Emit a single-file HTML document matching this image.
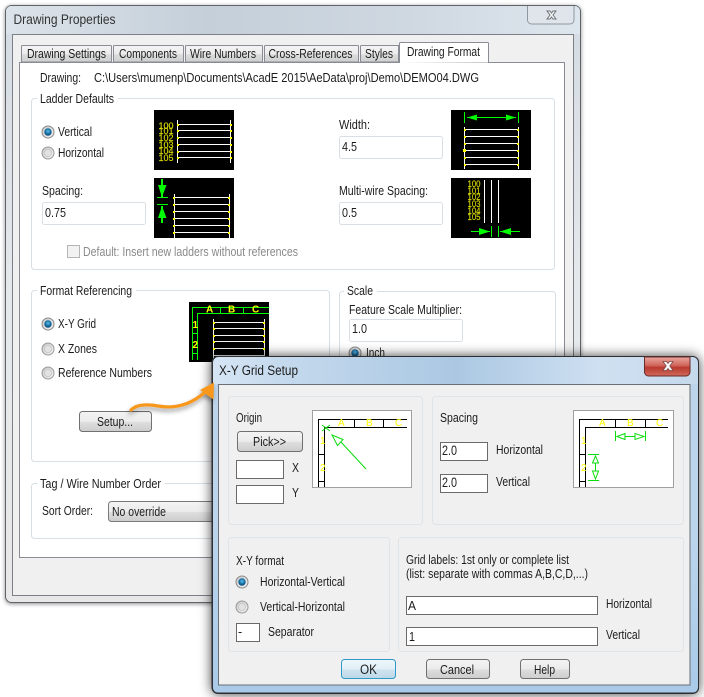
<!DOCTYPE html>
<html><head><meta charset="utf-8"><title>Drawing Properties</title>
<style>
html,body{margin:0;padding:0;background:#fff;width:704px;height:697px;overflow:hidden}
svg{display:block}
text{font-family:"Liberation Sans",sans-serif;font-size:12.5px;fill:#1c1c1c}
.t13{font-size:13.5px}
.y{font-family:"Liberation Sans",sans-serif;font-size:9.5px;fill:#dcdc00;stroke:#dcdc00;stroke-width:.15}
.yy{font-size:10px;fill:#ffff30}
</style></head><body>
<svg width="704" height="697" viewBox="0 0 704 697" xmlns="http://www.w3.org/2000/svg">
<defs>
<linearGradient id="tb1" x1="0" x2="1" y1="0" y2="0"><stop offset="0" stop-color="#dce3ea"/><stop offset=".35" stop-color="#c4cfd9"/><stop offset=".7" stop-color="#cfd8e1"/><stop offset="1" stop-color="#dde5ed"/></linearGradient>
<linearGradient id="fr1" x1="0" x2="0" y1="0" y2="1"><stop offset="0" stop-color="#cfd8e1"/><stop offset=".05" stop-color="#d5dce3"/><stop offset=".5" stop-color="#e6e9ec"/><stop offset="1" stop-color="#e8e8e8"/></linearGradient>
<linearGradient id="tb2" x1="0" x2="1" y1="0" y2="0"><stop offset="0" stop-color="#d6e5f4"/><stop offset=".15" stop-color="#c4d9ed"/><stop offset=".5" stop-color="#abc8e3"/><stop offset=".8" stop-color="#cfe0f1"/><stop offset="1" stop-color="#c5d9ec"/></linearGradient>
<linearGradient id="fr2" x1="0" x2="0" y1="0" y2="1"><stop offset="0" stop-color="#bdd4ea"/><stop offset=".5" stop-color="#bcd5ec"/><stop offset="1" stop-color="#a9cae8"/></linearGradient>
<linearGradient id="tab" x1="0" x2="0" y1="0" y2="1"><stop offset="0" stop-color="#f4f4f4"/><stop offset=".5" stop-color="#ececec"/><stop offset=".55" stop-color="#dcdcdc"/><stop offset="1" stop-color="#cfcfcf"/></linearGradient>
<linearGradient id="btn" x1="0" x2="0" y1="0" y2="1"><stop offset="0" stop-color="#f4f4f4"/><stop offset=".5" stop-color="#ebebeb"/><stop offset=".55" stop-color="#dddddd"/><stop offset="1" stop-color="#cdcdcd"/></linearGradient>
<linearGradient id="okb" x1="0" x2="0" y1="0" y2="1"><stop offset="0" stop-color="#eef7fc"/><stop offset=".5" stop-color="#e2eff7"/><stop offset=".55" stop-color="#cfe3ef"/><stop offset="1" stop-color="#bdd8e8"/></linearGradient>
<linearGradient id="red" x1="0" x2="0" y1="0" y2="1"><stop offset="0" stop-color="#e9a89f"/><stop offset=".45" stop-color="#d0645a"/><stop offset=".55" stop-color="#b93a2e"/><stop offset="1" stop-color="#d0685c"/></linearGradient>
<radialGradient id="rb" cx=".5" cy=".4" r=".6"><stop offset="0" stop-color="#5fc0ea"/><stop offset=".6" stop-color="#156fa4"/><stop offset="1" stop-color="#0d4a72"/></radialGradient>
<linearGradient id="rg" x1="0" x2="1" y1="0" y2="1"><stop offset="0" stop-color="#c6c6c6"/><stop offset="1" stop-color="#f6f6f6"/></linearGradient>
<filter id="s1" x="-10%" y="-10%" width="120%" height="120%"><feDropShadow dx="0" dy="1" stdDeviation="2.2" flood-color="#000" flood-opacity=".45"/></filter>
<filter id="s2" x="-10%" y="-10%" width="120%" height="120%"><feDropShadow dx="0" dy="0" stdDeviation="6" flood-color="#000" flood-opacity=".75"/></filter>
<filter id="s3" x="-20%" y="-40%" width="140%" height="200%"><feDropShadow dx="-1" dy="3" stdDeviation="2.5" flood-color="#000" flood-opacity=".4"/></filter>
<g id="r0"><circle r="6" fill="url(#rg)" stroke="#9a9a9a"/><circle r="3.6" fill="#e2e2e2" stroke="#c6c6c6" stroke-width=".8"/></g>
<g id="r1"><circle r="6" fill="url(#rg)" stroke="#8a8a8a"/><circle r="3.7" fill="url(#rb)"/></g>
</defs>

<!-- BACK WINDOW -->
<rect x="5.5" y="5.5" width="575" height="597" rx="6" fill="url(#fr1)" stroke="#5f6368" filter="url(#s1)"/>
<path d="M6 34V11a5 5 0 0 1 5-5H575a5 5 0 0 1 5 5V34Z" fill="url(#tb1)"/>
<path d="M527.5 6V20a4 4 0 0 0 4 4H570a4 4 0 0 0 4-4V6" fill="#dfe5eb" stroke="#8f979e"/>
<path d="M547 11l3 0 1.5 2 1.5-2 3 0-3 4 3 4-3 0-1.5-2-1.5 2-3 0 3-4Z" fill="#f5f5f5" stroke="#6f7479"/>
<text x="13.5" y="24" class="t13" textLength="102" lengthAdjust="spacingAndGlyphs" style="fill:#333">Drawing Properties</text>
<rect x="12.5" y="34.5" width="561" height="561" fill="#f0f0f0" stroke="#7c8086"/>
<rect x="19.5" y="62.5" width="545" height="495" fill="#fff" stroke="#898c95"/>

<!-- tabs -->
<g stroke="#898c95" fill="url(#tab)">
<path d="M21.5 62V46.5a1 1 0 0 1 1-1H110.500a1 1 0 0 1 1 1V62Z"/>
<path d="M113.500 62V46.500a1 1 0 0 1 1-1H182.500a1 1 0 0 1 1 1V62Z"/>
<path d="M185.500 62V46.500a1 1 0 0 1 1-1H261.500a1 1 0 0 1 1 1V62Z"/>
<path d="M264.500 62V46.500a1 1 0 0 1 1-1H357.500a1 1 0 0 1 1 1V62Z"/>
<path d="M360.500 62V46.500a1 1 0 0 1 1-1H398.500V62Z"/>
</g>
<path d="M399.500 63V43.500a1 1 0 0 1 1-1H487.500a1 1 0 0 1 1 1V62.500" fill="#fff" stroke="#898c95"/>
<text x="27" y="58" textLength="79" lengthAdjust="spacingAndGlyphs">Drawing Settings</text>
<text x="119" y="58" textLength="58" lengthAdjust="spacingAndGlyphs">Components</text>
<text x="190" y="58" textLength="66" lengthAdjust="spacingAndGlyphs">Wire Numbers</text>
<text x="268.500" y="58" textLength="84" lengthAdjust="spacingAndGlyphs">Cross-References</text>
<text x="365" y="58" textLength="28" lengthAdjust="spacingAndGlyphs">Styles</text>
<text x="407" y="56" textLength="73" lengthAdjust="spacingAndGlyphs">Drawing Format</text>

<text x="40" y="82" textLength="41" lengthAdjust="spacingAndGlyphs">Drawing:</text>
<text x="94" y="82" textLength="385" lengthAdjust="spacingAndGlyphs">C:\Users\mumenp\Documents\AcadE 2015\AeData\proj\Demo\DEMO04.DWG</text>

<!-- group boxes back -->
<g fill="none" stroke="#d5dfe5">
<rect x="31.500" y="98.500" width="523" height="171" rx="3"/>
<rect x="31.500" y="290.500" width="298" height="171" rx="3"/>
<rect x="339.500" y="291.500" width="216" height="100" rx="3"/>
<rect x="31.500" y="483.500" width="300" height="55" rx="3"/>
</g>
<rect x="37" y="92" width="81" height="12" fill="#fff"/>
<rect x="37" y="285" width="99" height="12" fill="#fff"/>
<rect x="344" y="285" width="33" height="12" fill="#fff"/>
<rect x="37" y="478" width="128" height="12" fill="#fff"/>
<text x="40" y="103" textLength="74" lengthAdjust="spacingAndGlyphs">Ladder Defaults</text>
<text x="40" y="295" textLength="92" lengthAdjust="spacingAndGlyphs">Format Referencing</text>
<text x="347" y="295" textLength="26" lengthAdjust="spacingAndGlyphs">Scale</text>
<text x="40" y="488" textLength="121" lengthAdjust="spacingAndGlyphs">Tag / Wire Number Order</text>

<use href="#r1" x="48" y="132"/>
<use href="#r0" x="48" y="153"/>
<text x="58" y="136" textLength="34" lengthAdjust="spacingAndGlyphs">Vertical</text>
<text x="58" y="157" textLength="46" lengthAdjust="spacingAndGlyphs">Horizontal</text>
<text x="42" y="195" textLength="41" lengthAdjust="spacingAndGlyphs">Spacing:</text>
<text x="339" y="129" textLength="31" lengthAdjust="spacingAndGlyphs">Width:</text>
<text x="339" y="195" textLength="89" lengthAdjust="spacingAndGlyphs">Multi-wire Spacing:</text>
<g fill="#fff" stroke="#d9dfe4">
<rect x="42.500" y="202.500" width="103" height="22" rx="2"/>
<rect x="339.500" y="136.500" width="103" height="22" rx="2"/>
<rect x="339.500" y="202.500" width="103" height="22" rx="2"/>
<rect x="349.500" y="319.500" width="113" height="22" rx="2"/>
</g>
<text x="45" y="217" textLength="21" lengthAdjust="spacingAndGlyphs">0.75</text>
<text x="342" y="151" textLength="15" lengthAdjust="spacingAndGlyphs">4.5</text>
<text x="342" y="217" textLength="15" lengthAdjust="spacingAndGlyphs">0.5</text>
<rect x="67.500" y="245.500" width="12" height="12" fill="#f2f2f2" stroke="#b5b5b5"/>
<text x="83" y="256" textLength="215" lengthAdjust="spacingAndGlyphs" style="fill:#8a8a8a">Default: Insert new ladders without references</text>

<!-- img 1 -->
<rect x="154" y="110" width="80" height="60" fill="#000"/>
<path d="M177.500 120V163M230.500 120V163M178 124.500H230M178 130.500H230M178 137.500H230M178 144.500H230M178 151.500H230M178 157.500H230" stroke="#fff"/>
<g fill="#ff0"><rect x="177" y="124" width="2" height="2"/><rect x="177" y="130" width="2" height="2"/><rect x="177" y="137" width="2" height="2"/><rect x="177" y="144" width="2" height="2"/><rect x="177" y="151" width="2" height="2"/><rect x="177" y="157" width="2" height="2"/><rect x="230" y="124" width="2" height="2"/><rect x="230" y="130" width="2" height="2"/><rect x="230" y="137" width="2" height="2"/><rect x="230" y="144" width="2" height="2"/><rect x="230" y="151" width="2" height="2"/><rect x="230" y="157" width="2" height="2"/></g>
<text class="y" x="158.500" y="129" textLength="15" lengthAdjust="spacingAndGlyphs">100</text>
<text class="y" x="158.500" y="134" textLength="15" lengthAdjust="spacingAndGlyphs">101</text>
<text class="y" x="158.500" y="141" textLength="15" lengthAdjust="spacingAndGlyphs">102</text>
<text class="y" x="158.500" y="148" textLength="15" lengthAdjust="spacingAndGlyphs">103</text>
<text class="y" x="158.500" y="154" textLength="15" lengthAdjust="spacingAndGlyphs">104</text>
<text class="y" x="158.500" y="161" textLength="15" lengthAdjust="spacingAndGlyphs">105</text>

<!-- img 2 -->
<rect x="154" y="178" width="80" height="60" fill="#000"/>
<path d="M174.500 194V238M229.500 194V238M175 197.500H229M175 204.500H229M175 211.500H229M175 218.500H229M175 225.500H229M175 232.500H229" stroke="#fff"/>
<g fill="#ff0"><rect x="173" y="197" width="2" height="2"/><rect x="173" y="204" width="2" height="2"/><rect x="173" y="211" width="2" height="2"/><rect x="173" y="218" width="2" height="2"/><rect x="173" y="225" width="2" height="2"/><rect x="173" y="232" width="2" height="2"/><rect x="228" y="197" width="2" height="2"/><rect x="228" y="204" width="2" height="2"/><rect x="228" y="211" width="2" height="2"/><rect x="228" y="218" width="2" height="2"/><rect x="228" y="225" width="2" height="2"/><rect x="228" y="232" width="2" height="2"/></g>
<g fill="#0f0"><rect x="161" y="179" width="2" height="44"/><path d="M158 185H166.500L162 197ZM162 206L166.500 218H158Z"/></g>
<rect x="161" y="198" width="2" height="8" fill="#000"/>
<path d="M157 197.500H168M157 204.500H168" stroke="#0f0"/>

<!-- img 3 -->
<rect x="451" y="110" width="80" height="60" fill="#000"/>
<path d="M464.500 127V169M518.500 127V169M465 129.500H518M465 136.500H518M465 143.500H518M465 150.500H518M465 157.500H518M465 164.500H518" stroke="#fff"/>
<g fill="#ff0"><rect x="464" y="129" width="2" height="2"/><rect x="464" y="136" width="2" height="2"/><rect x="464" y="143" width="2" height="2"/><rect x="463" y="149" width="3" height="3"/><rect x="464" y="157" width="2" height="2"/><rect x="464" y="164" width="2" height="2"/><rect x="517" y="129" width="2" height="2"/><rect x="517" y="136" width="2" height="2"/><rect x="517" y="143" width="2" height="2"/><rect x="517" y="150" width="2" height="2"/><rect x="517" y="157" width="2" height="2"/><rect x="517" y="164" width="2" height="2"/></g>
<path d="M464.500 112V123M518.500 112V123M467 117.500H516" stroke="#0f0"/>
<path d="M467 117.500L477 114.500V120.500ZM516 117.500L506 114.500V120.500Z" fill="#0f0"/>

<!-- img 4 -->
<rect x="451" y="178" width="80" height="60" fill="#000"/>
<path d="M484.500 180V223M491.500 180V223M498.500 180V223" stroke="#fff"/>
<text class="y" x="467.500" y="187" textLength="13" lengthAdjust="spacingAndGlyphs">100</text>
<text class="y" x="467.500" y="194" textLength="13" lengthAdjust="spacingAndGlyphs">101</text>
<text class="y" x="467.500" y="200" textLength="13" lengthAdjust="spacingAndGlyphs">102</text>
<text class="y" x="467.500" y="207" textLength="13" lengthAdjust="spacingAndGlyphs">103</text>
<text class="y" x="467.500" y="214" textLength="13" lengthAdjust="spacingAndGlyphs">104</text>
<text class="y" x="467.500" y="220" textLength="13" lengthAdjust="spacingAndGlyphs">105</text>
<path d="M491.500 226V237M498.500 226V237M471 231.500H490M500 231.500H520" stroke="#0f0"/>
<path d="M490 231.500L479 228V235ZM500 231.500L511 228V235Z" fill="#0f0"/>

<!-- format referencing -->
<use href="#r1" x="48" y="324"/>
<use href="#r0" x="48" y="349"/>
<use href="#r0" x="48" y="373"/>
<text x="58" y="328" textLength="38" lengthAdjust="spacingAndGlyphs">X-Y Grid</text>
<text x="58" y="353" textLength="39" lengthAdjust="spacingAndGlyphs">X Zones</text>
<text x="58" y="377" textLength="94" lengthAdjust="spacingAndGlyphs">Reference Numbers</text>
<rect x="189" y="302" width="80" height="60" fill="#000"/>
<path d="M192.500 307.500H269M197.500 313.500H269M192.500 307V360M197.500 313V360M220.500 307V313M243.500 307V313M192 333.500H198M192 353.500H198" stroke="#0f0"/>
<path d="M213.500 319V362M264.500 319V362M214 322.500H264M214 328.500H264M214 335.500H264M214 341.500H264M214 348.500H264M214 355.500H264" stroke="#f4f4f4"/>
<g fill="#ff0"><rect x="213" y="322" width="2" height="2"/><rect x="213" y="328" width="2" height="2"/><rect x="213" y="335" width="2" height="2"/><rect x="213" y="341" width="2" height="2"/><rect x="213" y="348" width="2" height="2"/><rect x="263" y="322" width="2" height="2"/><rect x="263" y="328" width="2" height="2"/><rect x="263" y="335" width="2" height="2"/><rect x="263" y="341" width="2" height="2"/><rect x="263" y="348" width="2" height="2"/></g>
<text class="yy" x="206" y="312.500" style="font-weight:bold;fill:#ff0">A</text>
<text class="yy" x="228" y="312.500" style="font-weight:bold;fill:#ff0">B</text>
<text class="yy" x="252" y="312.500" style="font-weight:bold;fill:#ff0">C</text>
<text class="yy" x="192.500" y="328" style="font-weight:bold;fill:#ff0">1</text>
<text class="yy" x="192.500" y="348" style="font-weight:bold;fill:#ff0">2</text>
<rect x="79.500" y="411.500" width="72" height="20" rx="3" fill="url(#btn)" stroke="#707070"/>
<text x="97" y="426" textLength="36" lengthAdjust="spacingAndGlyphs">Setup...</text>

<!-- scale -->
<text x="349" y="314" textLength="113" lengthAdjust="spacingAndGlyphs">Feature Scale Multiplier:</text>
<text x="352" y="333" textLength="15" lengthAdjust="spacingAndGlyphs">1.0</text>
<use href="#r1" x="355" y="353"/>
<text x="366" y="357" textLength="19" lengthAdjust="spacingAndGlyphs">Inch</text>

<!-- tag -->
<text x="42" y="515" textLength="51" lengthAdjust="spacingAndGlyphs">Sort Order:</text>
<rect x="108.500" y="501.500" width="130" height="20" rx="3" fill="url(#btn)" stroke="#7a7a7a"/>
<text x="112" y="516" textLength="54" lengthAdjust="spacingAndGlyphs">No override</text>

<!-- FRONT WINDOW -->
<rect x="212" y="356.500" width="486.500" height="337" rx="6" fill="url(#fr2)" stroke="#2d2f33" filter="url(#s2)"/>
<path d="M212.500 384V362.500a6 6 0 0 1 6-6H692.500a6 6 0 0 1 6 6V384Z" fill="url(#tb2)"/>
<path d="M212.500 362.500a6 6 0 0 1 6-6H692.500a6 6 0 0 1 6 6V688a5 5 0 0 1-5 5H217.500a5 5 0 0 1-5-5Z" fill="none" stroke="#2d2f33"/>
<path d="M644.500 357V372a4 4 0 0 0 4 4H686a4 4 0 0 0 4-4V357Z" fill="url(#red)" stroke="#6b2b28"/>
<path d="M663 361.500l3.500 0 1.500 2 1.500-2 3.500 0-3.200 4.500 3.200 4.500-3.500 0-1.500-2-1.500 2-3.500 0 3.200-4.500Z" fill="#f8f8f8" stroke="#7b4a48" stroke-width=".8"/>
<text x="219" y="375" class="t13" textLength="79" lengthAdjust="spacingAndGlyphs">X-Y Grid Setup</text>
<rect x="218.500" y="384.500" width="471.500" height="300.500" fill="#f0f0f0" stroke="#6a7076"/>

<g fill="none" stroke="#dfe4e8">
<rect x="228.500" y="396.500" width="194" height="128" rx="3"/>
<rect x="432.500" y="396.500" width="251" height="128" rx="3"/>
<rect x="228.500" y="537.500" width="161" height="114" rx="3"/>
<rect x="398.500" y="537.500" width="285" height="114" rx="3"/>
</g>

<text x="236" y="422" textLength="26" lengthAdjust="spacingAndGlyphs">Origin</text>
<rect x="237.500" y="431.500" width="65" height="20" rx="3" fill="url(#btn)" stroke="#707070"/>
<text x="253" y="446" textLength="33" lengthAdjust="spacingAndGlyphs">Pick&gt;&gt;</text>
<g fill="#fff" stroke="#6a6a6a">
<rect x="236.500" y="460.500" width="47" height="18"/>
<rect x="236.500" y="485.500" width="47" height="18"/>
<rect x="440.500" y="442.500" width="47" height="18"/>
<rect x="440.500" y="474.500" width="47" height="18"/>
<rect x="236.500" y="623.500" width="23" height="18"/>
<rect x="406.500" y="596.500" width="191" height="18"/>
<rect x="406.500" y="627.500" width="191" height="18"/>
</g>
<text x="292" y="472" textLength="7" lengthAdjust="spacingAndGlyphs">X</text>
<text x="292" y="497" textLength="7" lengthAdjust="spacingAndGlyphs">Y</text>

<!-- pic 1 -->
<rect x="312.500" y="410.500" width="99" height="77" fill="#fff" stroke="#a0a0a0"/>
<path d="M318 419.500H407M324 427.500H407M318.500 419V487M324.500 427V487M354.500 419V427M383.500 419V427M319 454.500H324M319 481.500H324" stroke="#000"/>
<text class="yy" x="338" y="426" style="fill:#ff0">A</text>
<text class="yy" x="366" y="426" style="fill:#ff0">B</text>
<text class="yy" x="395" y="426" style="fill:#ff0">C</text>
<text class="yy" x="320" y="444" style="fill:#ff0">1</text>
<text class="yy" x="320" y="471" style="fill:#ff0">2</text>
<path d="M322 425L330 431M330 425L322 431M340 441L366 469" stroke="#0cdc0c" fill="none"/>
<path d="M332 435L343 439.500L337.500 445.500Z" fill="#fff" stroke="#0cdc0c"/>

<text x="440" y="422" textLength="38" lengthAdjust="spacingAndGlyphs">Spacing</text>
<text x="442" y="455" class="t13" textLength="15" lengthAdjust="spacingAndGlyphs">2.0</text>
<text x="442" y="487" class="t13" textLength="15" lengthAdjust="spacingAndGlyphs">2.0</text>
<text x="496" y="454" textLength="47" lengthAdjust="spacingAndGlyphs">Horizontal</text>
<text x="496" y="486" textLength="34" lengthAdjust="spacingAndGlyphs">Vertical</text>

<!-- pic 2 -->
<rect x="573.500" y="410.500" width="100" height="77" fill="#fff" stroke="#a0a0a0"/>
<path d="M579 419.500H668M585 427.500H668M579.500 419V487M585.500 427V487M615.500 419V427M645.500 419V427M580 454.500H585M580 481.500H585" stroke="#000"/>
<text class="yy" x="599" y="426" style="fill:#ff0">A</text>
<text class="yy" x="627" y="426" style="fill:#ff0">B</text>
<text class="yy" x="656" y="426" style="fill:#ff0">C</text>
<text class="yy" x="581" y="444" style="fill:#ff0">1</text>
<text class="yy" x="581" y="471" style="fill:#ff0">2</text>
<path d="M615.500 431V441M645.500 431V441M625 436.500H635M595.500 462V472M588 454.500H599M588 480.500H599" stroke="#0cdc0c" fill="none"/>
<path d="M617 436.500L625 433.500V439.500ZM644 436.500L635 433.500V439.500ZM595.500 456L592.500 463H598.500ZM595.500 479L592.500 471H598.500Z" fill="#fff" stroke="#0cdc0c"/>

<!-- lower left -->
<text x="236" y="565" textLength="48" lengthAdjust="spacingAndGlyphs">X-Y format</text>
<use href="#r1" x="242" y="582"/>
<use href="#r0" x="242" y="607"/>
<text x="260" y="586" textLength="85" lengthAdjust="spacingAndGlyphs">Horizontal-Vertical</text>
<text x="260" y="611" textLength="85" lengthAdjust="spacingAndGlyphs">Vertical-Horizontal</text>
<text x="238" y="636">-</text>
<text x="268" y="636" textLength="46" lengthAdjust="spacingAndGlyphs">Separator</text>

<!-- lower right -->
<text x="406" y="564" textLength="163" lengthAdjust="spacingAndGlyphs">Grid labels: 1st only or complete list</text>
<text x="406" y="578" textLength="182" lengthAdjust="spacingAndGlyphs">(list: separate with commas A,B,C,D,...)</text>
<text x="408" y="610" textLength="8" lengthAdjust="spacingAndGlyphs">A</text>
<text x="409" y="641" textLength="6" lengthAdjust="spacingAndGlyphs">1</text>
<text x="606" y="608" textLength="46" lengthAdjust="spacingAndGlyphs">Horizontal</text>
<text x="606" y="639" textLength="34" lengthAdjust="spacingAndGlyphs">Vertical</text>

<!-- buttons -->
<rect x="341.500" y="659.500" width="54" height="19" rx="3" fill="url(#okb)" stroke="#2f9ac9"/>
<rect x="426.500" y="659.500" width="63" height="19" rx="3" fill="url(#btn)" stroke="#707070"/>
<rect x="520.500" y="659.500" width="49" height="19" rx="3" fill="url(#btn)" stroke="#707070"/>
<text x="360" y="674" class="t13" textLength="17" lengthAdjust="spacingAndGlyphs">OK</text>
<text x="440" y="674" textLength="34" lengthAdjust="spacingAndGlyphs">Cancel</text>
<text x="534" y="674" textLength="21" lengthAdjust="spacingAndGlyphs">Help</text>

<!-- orange arrow -->
<g filter="url(#s3)">
<path d="M131 410C137 404 147 404 158 406C175 409 190 405 204 393" fill="none" stroke="#f7981d" stroke-width="3.200" stroke-linecap="round"/>
<path d="M214 382.500L200 390L213.500 399.500Z" fill="#f7981d"/>
</g>
</svg>
</body></html>
